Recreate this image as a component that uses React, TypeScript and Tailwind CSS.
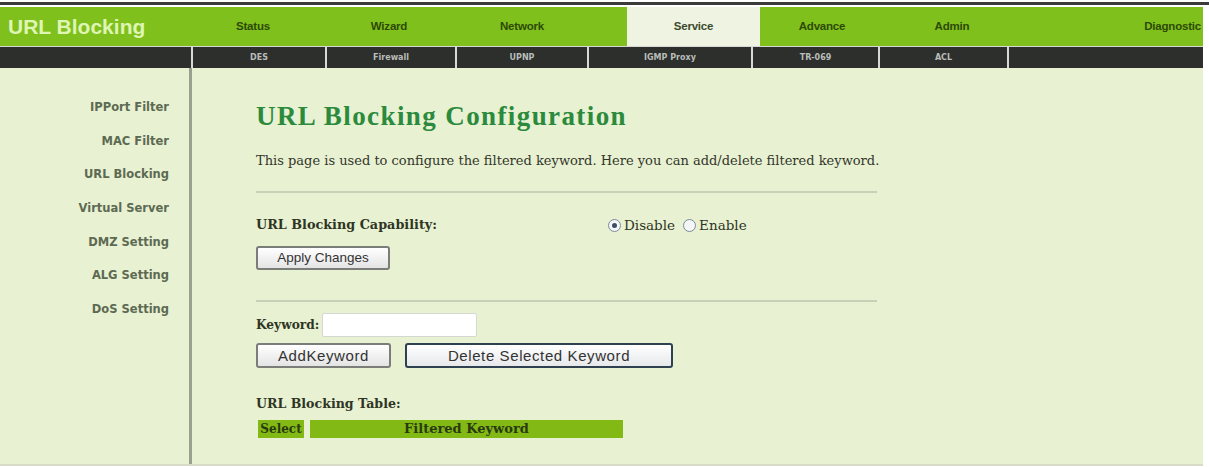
import React from "react";

const serif = { fontFamily: '"Liberation Serif", "Times New Roman", serif' };
const dserif = { fontFamily: '"DejaVu Serif", "Liberation Serif", serif' };
const sans = { fontFamily: '"Liberation Sans", Arial, sans-serif' };

function Radio({ checked }: { checked?: boolean }) {
  return (
    <span className="inline-flex items-center justify-center w-[13px] h-[13px] rounded-full border border-[#7d8a9a] bg-[#f4f6f8] mr-[3px]">
      {checked && <span className="w-[5px] h-[5px] rounded-full bg-[#3b4f63]" />}
    </span>
  );
}

export default function App() {
  const headerItems = [
    { label: "Status", w: "w-[126px]" },
    { label: "Wizard", w: "w-[146px]" },
    { label: "Network", w: "w-[120px]" },
  ];
  const subItems = [
    { label: "DES", w: "w-[132px]" },
    { label: "Firewall", w: "w-[128px]" },
    { label: "UPNP", w: "w-[130px]" },
    { label: "IGMP Proxy", w: "w-[162px]" },
    { label: "TR-069", w: "w-[125px]" },
    { label: "ACL", w: "w-[127px]" },
  ];
  const side = [
    "IPPort Filter",
    "MAC Filter",
    "URL Blocking",
    "Virtual Server",
    "DMZ Setting",
    "ALG Setting",
    "DoS Setting",
  ];
  const headCls = "text-[11.5px] font-bold text-[#2c4a06] tracking-[-0.2px]";
  return (
    <div
      className="w-[1209px] h-[467px] bg-white overflow-hidden pt-[2px]"
      style={{ fontFamily: '"DejaVu Sans", Verdana, sans-serif' }}
    >
      <div className="h-[3px] bg-[#3a3a3a]" />
      <div className="w-[1203px]">
        <div className="h-[2px] bg-white" />
        {/* Header */}
        <div className="flex h-[39px] bg-[#80c01c] items-center">
          <div className="w-[190px] pl-[8px] text-[21px] font-bold text-[#def5b4]" style={sans}>
            URL Blocking
          </div>
          {headerItems.map((h) => (
            <div key={h.label} className={`${h.w} text-center ${headCls}`} style={sans}>
              {h.label}
            </div>
          ))}
          <div className="w-[45px]" />
          <div
            className="w-[133px] h-full flex items-center justify-center bg-[#eef3e2] text-[11.5px] font-bold text-[#3c4a2c] tracking-[-0.2px]"
            style={sans}
          >
            Service
          </div>
          <div className={`w-[124px] text-center ${headCls}`} style={sans}>
            Advance
          </div>
          <div className={`w-[136px] text-center ${headCls}`} style={sans}>
            Admin
          </div>
          <div className={`flex-1 text-right pr-[2px] ${headCls}`} style={sans}>
            Diagnostic
          </div>
        </div>
        {/* Sub bar */}
        <div className="flex h-[22px] bg-[#d8d8d8] gap-[2px] pt-[1px]">
          <div className="w-[191px] bg-[#2d2f2d]" />
          {subItems.map((s) => (
            <div
              key={s.label}
              className={`${s.w} bg-[#2d2f2d] flex items-center justify-center text-[8px] font-bold text-[#b9bdb9]`}
            >
              {s.label}
            </div>
          ))}
          <div className="flex-1 bg-[#2d2f2d]" />
        </div>
        {/* Body */}
        <div className="flex h-[398px] bg-[#e8f1d2] border-b-[2px] border-[#d6dcc8]">
          <div className="w-[192px] border-r-[3px] border-[#9aa090] flex flex-col items-end pr-[20px] pt-[31px] gap-[16.7px]">
            {side.map((s) => (
              <div key={s} className="text-[11.5px] leading-[17px] font-bold text-[#5d6a52]">
                {s}
              </div>
            ))}
          </div>
          <div className="flex-1 pl-[64px] pt-[28px] text-[#2a3320]" style={dserif}>
            <div
              className="text-[27px] font-bold text-[#2b8a3c] leading-[40px] tracking-[1.4px]"
              style={serif}
            >
              URL Blocking Configuration
            </div>
            <div className="mt-[16px] text-[13px] leading-[18px] text-[#33362a] whitespace-nowrap">
              This page is used to configure the filtered keyword. Here you can add/delete filtered keyword.
            </div>
            <div className="w-[621px] h-[2px] bg-[#c9d0b8] mt-[21px]" />
            <div className="flex items-center mt-[22px] h-[20px]">
              <div className="w-[352px] text-[12.8px] font-bold text-[#2e3524]">
                URL Blocking Capability:
              </div>
              <div className="flex items-center text-[13.5px] text-[#2e3524]">
                <Radio checked />
                <span>Disable</span>
                <span className="w-[8px]" />
                <Radio />
                <span>Enable</span>
              </div>
            </div>
            <button
              className="mt-[11px] w-[134px] h-[24px] rounded-[3px] border-[2px] border-[#7a7d78] bg-gradient-to-b from-[#ffffff] to-[#e4e4e4] text-[13.5px] text-[#333]"
              style={sans}
            >
              Apply Changes
            </button>
            <div className="w-[621px] h-[2px] bg-[#c9d0b8] mt-[30px]" />
            <div className="flex items-center mt-[11px]">
              <span className="text-[12.2px] font-bold text-[#2e3524]">Keyword:</span>
              <input
                className="ml-[3px] w-[155px] h-[24px] bg-white border border-[#d4d8d0] rounded-[2px]"
                defaultValue=""
              />
            </div>
            <div className="flex items-center mt-[6px] gap-[14px]">
              <button
                className="w-[135px] h-[25px] rounded-[3px] border-[2px] border-[#7a7d78] bg-gradient-to-b from-[#ffffff] to-[#e4e4e4] text-[15px] tracking-[0.6px] text-[#333]"
                style={sans}
              >
                AddKeyword
              </button>
              <button
                className="w-[268px] h-[25px] rounded-[3px] border-[2px] border-[#2f4050] bg-gradient-to-b from-[#ffffff] to-[#e6e8ea] text-[15px] tracking-[0.6px] text-[#333]"
                style={sans}
              >
                Delete Selected Keyword
              </button>
            </div>
            <div className="mt-[27px] text-[12.6px] font-bold text-[#2e3524]">
              URL Blocking Table:
            </div>
            <div className="flex mt-[6px] ml-[2px] gap-[6px] h-[18px]">
              <div className="w-[46px] bg-[#82b914] text-[12px] font-bold text-[#2a3a10] flex items-center justify-center">
                Select
              </div>
              <div className="w-[313px] bg-[#82b914] text-[13px] font-bold text-[#2a3a10] flex items-center justify-center">
                Filtered Keyword
              </div>
            </div>
          </div>
        </div>
      </div>
    </div>
  );
}
